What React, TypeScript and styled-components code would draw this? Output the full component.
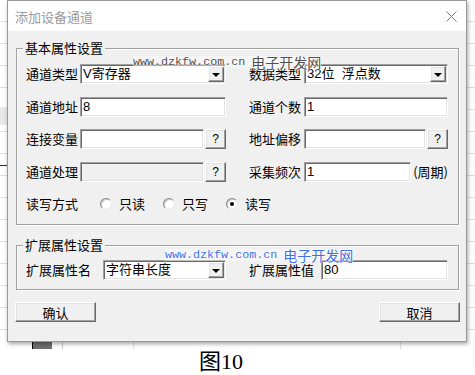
import React from "react";
import styled, { createGlobalStyle, css } from "styled-components";

const GlobalStyle = createGlobalStyle`
  html, body { margin: 0; padding: 0; background: #fff; }
  body {
    font-family: "Liberation Sans", "Noto Sans CJK SC", sans-serif;
    font-size: 13px;
    color: #000;
  }
  * { box-sizing: border-box; }
`;

const sunken = css`
  border-top: 1px solid #a0a0a0;
  border-left: 1px solid #a0a0a0;
  border-right: 1px solid #fff;
  border-bottom: 1px solid #fff;
  box-shadow: inset 1px 1px 0 #696969, inset -1px -1px 0 #e3e3e3;
`;

const raised = css`
  background: #f0f0f0;
  border-top: 1px solid #fff;
  border-left: 1px solid #fff;
  border-right: 1px solid #696969;
  border-bottom: 1px solid #696969;
  box-shadow: inset -1px -1px 0 #a0a0a0, inset 1px 1px 0 #e3e3e3;
`;

const Page = styled.div`
  width: 475px;
  height: 375px;
  overflow: hidden;
  display: flex;
  flex-direction: column;
`;

/* spreadsheet that sits behind the dialog */
const Desk = styled.div`
  height: 350px;
  padding-left: 7px;
  display: flex;
  align-items: flex-start;
  background:
    linear-gradient(#2b2b2b, #2b2b2b) 0 165px / 7px 1px no-repeat,
    linear-gradient(#e8e8e8, #e8e8e8) 0 107px / 7px 18px no-repeat,
    linear-gradient(#000, #000) 32px 342px / 1px 8px no-repeat,
    linear-gradient(#6e6e6e, #6e6e6e) 33px 342px / 19px 8px no-repeat,
    linear-gradient(#c8c8c8, #c8c8c8) 62px 342px / 1px 8px no-repeat,
    linear-gradient(#e0e0e0, #e0e0e0) 133px 342px / 1px 8px no-repeat,
    linear-gradient(#e0e0e0, #e0e0e0) 400px 342px / 1px 8px no-repeat,
    repeating-linear-gradient(to bottom, #fff 0 21px, #dedede 21px 22px);
`;

const Dialog = styled.div`
  position: relative;
  width: 460px;
  height: 342px;
  background: #f0f0f0;
  border: 1px solid #9a9a9a;
  box-shadow: 1px 2px 4px rgba(0, 0, 0, 0.35);
  display: flex;
  flex-direction: column;
`;

const TitleBar = styled.div`
  height: 30px;
  flex: none;
  background: #fff;
  display: flex;
  align-items: center;
  justify-content: space-between;
  padding: 0 9px 0 7px;
  color: #9b9b9b;
  font-family: "Noto Sans CJK SC", sans-serif;
  font-size: 13px;
`;

const Body = styled.div`
  padding: 9px 7px 19px 8px;
  display: flex;
  flex-direction: column;
`;

const Group = styled.fieldset<{ $pt: number; $pb: number; $mt?: number }>`
  margin: ${(p) => p.$mt ?? 0}px 0 0 0;
  min-width: 0;
  padding: ${(p) => p.$pt}px 10px ${(p) => p.$pb}px 9px;
  border: 1px solid #a0a0a0;
  box-shadow: inset 1px 1px 0 #fff, 1px 1px 0 #fff;
  display: flex;
  flex-direction: column;
  gap: 12.5px;
`;

const Legend = styled.legend`
  padding: 0 2px;
  margin-left: -3px;
  line-height: 16px;
  font-family: "Noto Sans CJK SC", sans-serif;
  font-size: 13px;
`;

const Row = styled.div`
  display: flex;
  align-items: center;
  gap: 23px;
  height: 20px;
`;

const Half = styled.div<{ $w: number }>`
  width: ${(p) => p.$w}px;
  height: 20px;
  display: flex;
  align-items: center;
  gap: 1px;
`;

const Label = styled.span<{ $w: number }>`
  flex: none;
  width: ${(p) => p.$w}px;
  white-space: nowrap;
  line-height: 14px;
  font-family: "Noto Sans CJK SC", sans-serif;
`;

const TextBox = styled.div<{ $disabled?: boolean }>`
  flex: 1;
  min-width: 0;
  height: 20px;
  ${sunken};
  background: ${(p) => (p.$disabled ? "#f0f0f0" : "#fff")};
  padding-left: 2px;
  display: flex;
  align-items: center;
  white-space: pre;
  line-height: 14px;
  font-family: "Liberation Sans", "Noto Sans CJK SC", sans-serif;
`;

const ComboBox = styled(TextBox)`
  justify-content: space-between;
  padding-right: 1px;
`;

const DropButton = styled.span`
  width: 16px;
  height: 16px;
  ${raised};
  display: flex;
  align-items: center;
  justify-content: center;

  &::after {
    content: "";
    border-left: 4px solid transparent;
    border-right: 4px solid transparent;
    border-top: 4px solid #000;
    margin-top: 1px;
  }
`;

const SmallButton = styled.span`
  flex: none;
  width: 21px;
  height: 20px;
  ${raised};
  display: flex;
  align-items: center;
  justify-content: center;
  font-size: 12px;
  line-height: 14px;
`;

const Unit = styled.span`
  flex: none;
  margin-left: 1px;
  line-height: 14px;
  font-family: "Noto Sans CJK SC", sans-serif;
`;

const RadioSet = styled.div`
  display: flex;
  align-items: center;
  gap: 18px;
`;

const RadioOption = styled.label`
  display: flex;
  align-items: center;
  gap: 7px;
  line-height: 14px;
  font-family: "Noto Sans CJK SC", sans-serif;
`;

const RadioDot = styled.span<{ $checked?: boolean }>`
  width: 12px;
  height: 12px;
  border-radius: 50%;
  background: #fff;
  border: 1px solid;
  border-color: #8a8a8a #e8e8e8 #e8e8e8 #8a8a8a;
  box-shadow: inset 1px 1px 0 #c8c8c8;
  display: flex;
  align-items: center;
  justify-content: center;

  &::after {
    content: "";
    width: 4px;
    height: 4px;
    border-radius: 50%;
    background: ${(p) => (p.$checked ? "#000" : "transparent")};
  }
`;

const ButtonRow = styled.div`
  margin: 12px -1px 0 -1px;
  display: flex;
  justify-content: space-between;
`;

const PushButton = styled.span`
  width: 81px;
  height: 20px;
  ${raised};
  display: flex;
  align-items: center;
  justify-content: center;
  font-family: "Noto Sans CJK SC", sans-serif;
`;

const Watermark = styled.div<{ $x: number; $y: number; $color: string }>`
  position: absolute;
  left: ${(p) => p.$x}px;
  top: ${(p) => p.$y}px;
  display: flex;
  align-items: center;
  gap: 6px;
  height: 12px;
  color: ${(p) => p.$color};
  text-shadow: 0 0 2px #fff, 0 0 2px #fff, 0 0 1px #fff;
  background: rgba(255, 255, 255, 0.35);
  line-height: 12px;
  pointer-events: none;
`;

const WmUrl = styled.span`
  font-family: "Liberation Mono", monospace;
  font-size: 11.7px;
`;

const WmName = styled.span`
  font-family: "Noto Sans CJK SC", sans-serif;
  font-size: 14px;
`;

const Caption = styled.div`
  margin-left: 199px;
  line-height: 26px;
  font-size: 22px;
  font-family: "Liberation Serif", "Noto Sans CJK SC", serif;
`;

const CloseIcon = () => (
  <svg width="11" height="11" viewBox="0 0 11 11">
    <path d="M0.5 0.5 L10.5 10.5 M10.5 0.5 L0.5 10.5" stroke="#7a7a7a" strokeWidth="1" fill="none" />
  </svg>
);

const Combo: React.FC<{ value: string }> = ({ value }) => (
  <ComboBox>
    <span>{value}</span>
    <DropButton />
  </ComboBox>
);

const modes = [
  { text: "只读", checked: false },
  { text: "只写", checked: false },
  { text: "读写", checked: true },
];

export default function App() {
  return (
    <Page>
      <GlobalStyle />
      <Desk>
        <Dialog>
          <TitleBar>
            <span>添加设备通道</span>
            <CloseIcon />
          </TitleBar>
          <Body>
            <Group $pt={8} $pb={10}>
              <Legend>基本属性设置</Legend>
              <Row>
                <Half $w={200}>
                  <Label $w={53}>通道类型</Label>
                  <Combo value="V寄存器" />
                </Half>
                <Half $w={199}>
                  <Label $w={54}>数据类型</Label>
                  <Combo value="32位  浮点数" />
                </Half>
              </Row>
              <Row>
                <Half $w={200}>
                  <Label $w={53}>通道地址</Label>
                  <TextBox>8</TextBox>
                </Half>
                <Half $w={199}>
                  <Label $w={54}>通道个数</Label>
                  <TextBox>1</TextBox>
                </Half>
              </Row>
              <Row>
                <Half $w={200}>
                  <Label $w={53}>连接变量</Label>
                  <TextBox />
                  <SmallButton>?</SmallButton>
                </Half>
                <Half $w={199}>
                  <Label $w={54}>地址偏移</Label>
                  <TextBox />
                  <SmallButton>?</SmallButton>
                </Half>
              </Row>
              <Row>
                <Half $w={200}>
                  <Label $w={53}>通道处理</Label>
                  <TextBox $disabled />
                  <SmallButton>?</SmallButton>
                </Half>
                <Half $w={199}>
                  <Label $w={54}>采集频次</Label>
                  <TextBox>1</TextBox>
                  <Unit>(周期)</Unit>
                </Half>
              </Row>
              <Row>
                <Label $w={51}>读写方式</Label>
                <RadioSet>
                  {modes.map((m) => (
                    <RadioOption key={m.text}>
                      <RadioDot $checked={m.checked} />
                      {m.text}
                    </RadioOption>
                  ))}
                </RadioSet>
              </Row>
            </Group>
            <Group $pt={7} $pb={9} $mt={12}>
              <Legend>扩展属性设置</Legend>
              <Row>
                <Half $w={200}>
                  <Label $w={76}>扩展属性名</Label>
                  <Combo value="字符串长度" />
                </Half>
                <Half $w={199}>
                  <Label $w={71}>扩展属性值</Label>
                  <TextBox>80</TextBox>
                </Half>
              </Row>
            </Group>
            <ButtonRow>
              <PushButton>确认</PushButton>
              <PushButton>取消</PushButton>
            </ButtonRow>
          </Body>
          <Watermark $x={125} $y={55} $color="#505050">
            <WmUrl>www.dzkfw.com.cn</WmUrl>
            <WmName>电子开发网</WmName>
          </Watermark>
          <Watermark $x={157} $y={248} $color="#3d6fe6">
            <WmUrl>www.dzkfw.com.cn</WmUrl>
            <WmName>电子开发网</WmName>
          </Watermark>
        </Dialog>
      </Desk>
      <Caption>图10</Caption>
    </Page>
  );
}
